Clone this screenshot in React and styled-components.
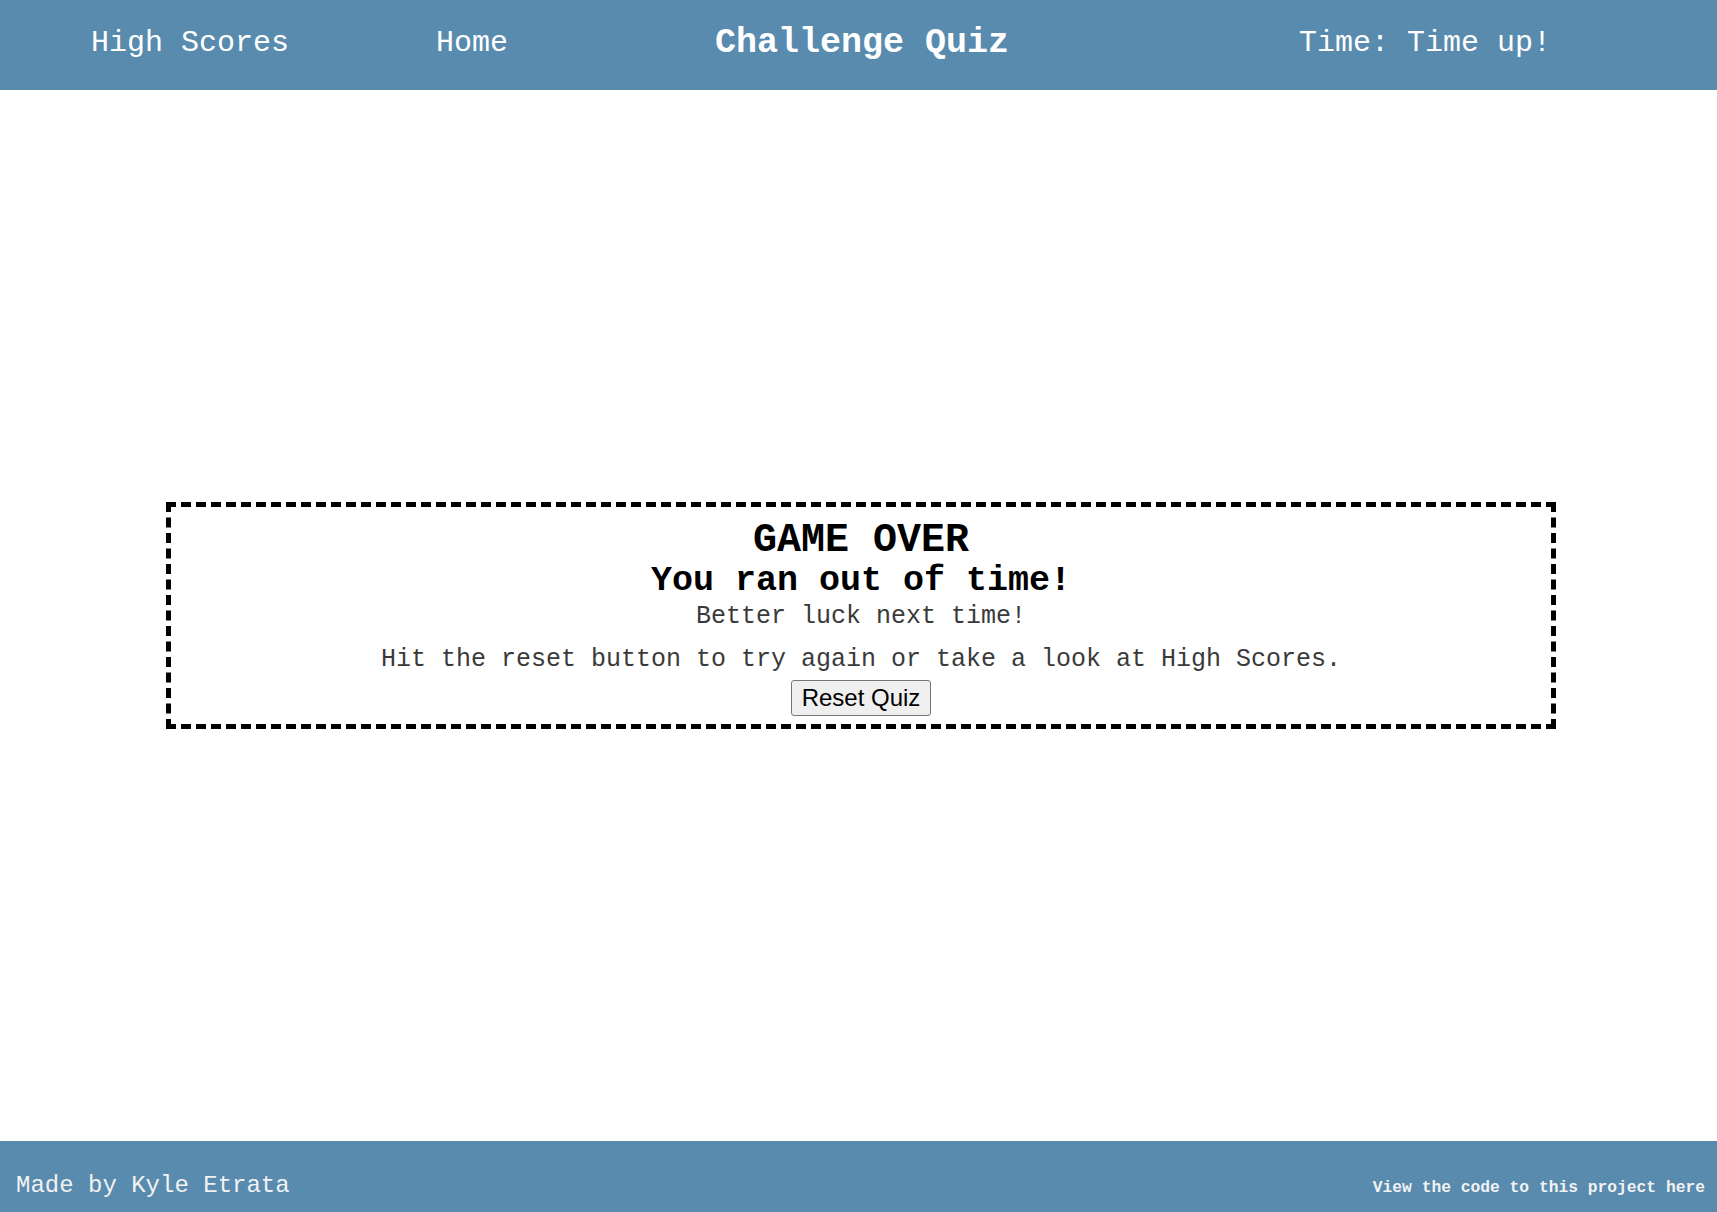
import React from "react";
import styled, { createGlobalStyle } from "styled-components";

const GlobalStyle = createGlobalStyle`
  html, body {
    margin: 0;
    padding: 0;
    background: #ffffff;
  }
  body {
    font-family: "Liberation Mono", "Courier New", monospace;
  }
  * { box-sizing: border-box; }
`;

const Page = styled.div`
  display: flex;
  flex-direction: column;
  min-height: 100vh;
`;

const Header = styled.header`
  display: flex;
  align-items: center;
  height: 90px;
  padding: 0 166px 4px 91px;
  background: #588bae;
  color: #ffffff;
`;

const Nav = styled.nav`
  display: flex;
  align-items: center;
  gap: 147px;
`;

const NavLink = styled.a`
  font-size: 30px;
  color: #ffffff;
  text-decoration: none;
  cursor: pointer;
`;

const Title = styled.h1`
  margin: 0 0 0 207px;
  font-size: 35px;
  font-weight: bold;
  color: #ffffff;
`;

const Timer = styled.div`
  margin-left: auto;
  font-size: 30px;
  color: #ffffff;
`;

const Main = styled.main`
  flex: 1;
  display: flex;
  align-items: center;
`;

const Box = styled.section`
  width: 1390px;
  margin: 0 161px 0 166px;
  border: 5px dashed #000000;
  padding: 12px 0 8px;
  display: flex;
  flex-direction: column;
  align-items: center;
  text-align: center;
`;

const Heading = styled.h2`
  margin: ${(p) => p.$mt || 0}px 0 0;
  font-size: ${(p) => p.$size}px;
  line-height: ${(p) => p.$lh}px;
  font-weight: bold;
  color: #000000;
`;

const Text = styled.p`
  margin: ${(p) => p.$mt}px 0 0;
  font-size: 25px;
  line-height: 30px;
  color: #3a3a3a;
`;

const ResetButton = styled.button`
  margin-top: 5px;
  font-family: "Liberation Sans", Arial, sans-serif;
  font-size: 24px;
  padding: 3px 10px;
  height: 36px;
  background: #efefef;
  color: #000000;
  border: 1px solid #767676;
  border-radius: 3px;
  cursor: pointer;
`;

const Footer = styled.footer`
  display: flex;
  align-items: baseline;
  justify-content: space-between;
  height: 71px;
  padding: 31px 12px 0 16px;
  background: #588bae;
  color: #f2f2f2;
`;

const Credit = styled.span`
  font-size: 24px;
`;

const CodeLink = styled.a`
  font-size: 16.3px;
  font-weight: bold;
  color: #f2f2f2;
  text-decoration: none;
`;

export default function App() {
  return (
    <>
      <GlobalStyle />
      <Page>
        <Header>
          <Nav>
            <NavLink>High Scores</NavLink>
            <NavLink>Home</NavLink>
          </Nav>
          <Title>Challenge Quiz</Title>
          <Timer>Time: Time up!</Timer>
        </Header>
        <Main>
          <Box>
            <Heading $size={40} $lh={44}>GAME OVER</Heading>
            <Heading $size={35} $lh={33} $mt={2}>You ran out of time!</Heading>
            <Text $mt={4}>Better luck next time!</Text>
            <Text $mt={13}>Hit the reset button to try again or take a look at High Scores.</Text>
            <ResetButton>Reset Quiz</ResetButton>
          </Box>
        </Main>
        <Footer>
          <Credit>Made by Kyle Etrata</Credit>
          <CodeLink>View the code to this project here</CodeLink>
        </Footer>
      </Page>
    </>
  );
}
